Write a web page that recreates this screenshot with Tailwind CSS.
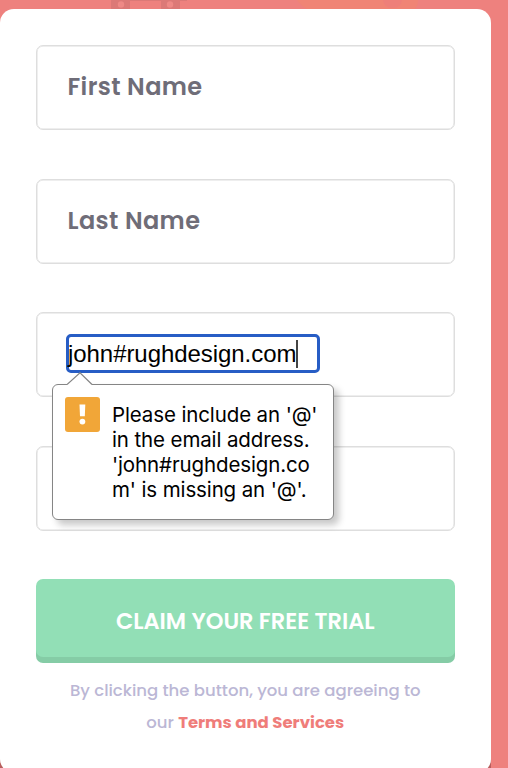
<!DOCTYPE html>
<html lang="en">
<head>
<meta charset="utf-8">
<title>Claim your free trial</title>
<script src="https://cdn.jsdelivr.net/npm/@tailwindcss/browser@4"></script>
</head>
<body class="relative h-[768px] w-[508px] overflow-hidden bg-[#ee817e] pt-[9px] font-['Poppins','Inter',sans-serif]">
  <svg class="absolute left-0 top-0" width="508" height="10" viewBox="0 0 508 10" aria-hidden="true">
    <path d="M111 0H187V1H180V9H161V1H130V9H111Z" fill="#dc7977"/>
    <circle cx="121" cy="4.500" r="3.200" fill="#ee8986"/>
    <circle cx="170" cy="4.500" r="3.200" fill="#ee8986"/>
    <path d="M297 0H418Q418 6 415 9H307Q300 5 297 0Z" fill="#f08475"/>
    <path d="M383 0H402Q401 8 392.500 8Q384 8 383 0Z" fill="#ee7f79"/>
  </svg>
  <main class="relative h-[764px] w-[490.500px] rounded-[14px] bg-white pl-9 pr-9 pt-9 shadow-[0_8px_0_#b85f5d]">
    <form class="flex w-[418.500px] flex-col">
      <div class="flex flex-col gap-[48.300px]">
        <div class="flex h-[85.300px] items-center rounded-[7px] border border-[#dedede] pb-[1.500px] pl-[30.500px] shadow-[inset_0_0_0_0.500px_#dedede]">
          <span class="whitespace-nowrap text-[24px] font-semibold tracking-[0.400px] text-[#6f6d78]">First Name</span>
        </div>
        <div class="flex h-[85.300px] items-center rounded-[7px] border border-[#dedede] pb-[1px] pl-[30.500px] shadow-[inset_0_0_0_0.500px_#dedede]">
          <span class="whitespace-nowrap text-[24px] font-semibold tracking-[0.400px] text-[#6f6d78]">Last Name</span>
        </div>
        <div class="relative flex h-[85.300px] items-start rounded-[7px] border border-[#dedede] pl-[29px] pt-[21px] shadow-[inset_0_0_0_0.500px_#dedede]">
          <div class="flex h-[39px] w-[253.500px] items-center rounded-[5px] border-[3px] border-[#275dc5] bg-white">
            <span class="-ml-px whitespace-nowrap font-['Liberation_Sans',Arial,sans-serif] text-[24px] tracking-[-0.060px] text-black">john#rughdesign.com</span>
            <span class="h-[28px] w-[1.500px] bg-[#444]"></span>
          </div>
          <div class="absolute left-[15px] top-[71px] z-10 flex h-[136px] w-[282px] rounded-[6px] border-[1.500px] border-[#858585] bg-white pl-[12px] pt-[12px] shadow-[5px_5px_7px_rgba(0,0,0,0.22)]">
            <svg class="absolute left-[14px] top-[-13px]" width="26" height="14" viewBox="0 0 26 14" aria-hidden="true"><path d="M0 12.500L13 .8L25 12.500V14H0Z" fill="white"/><path d="M0 12.500L13 .8L25 12.500" fill="none" stroke="#858585" stroke-width="1.200"/></svg>
            <svg class="shrink-0" width="35" height="35" viewBox="0 0 35 35" aria-label="Warning"><rect width="35" height="35" rx="3" fill="#f1a638"/><path d="M14.500 7.500H20.300L19.800 19.300H15Z" fill="white"/><circle cx="17.400" cy="24.600" r="2.900" fill="white"/></svg>
            <p class="ml-[12px] mt-[4.500px] whitespace-nowrap font-['Inter',sans-serif] text-[20.500px] leading-[25px] tracking-[-0.120px] text-black">Please include an '@'<br>in the email address.<br>'john#rughdesign.co<br>m' is missing an '@'.</p>
          </div>
        </div>
        <div class="h-[85.300px] rounded-[7px] border border-[#dedede] shadow-[inset_0_0_0_0.500px_#dedede]"></div>
      </div>
      <button type="button" class="mt-[48px] flex h-[78px] items-center justify-center rounded-[7px] bg-[#92dfb6] pt-[8px] text-[22.500px] font-semibold text-white shadow-[0_6px_0_#85cca6]"><span class="whitespace-nowrap">CLAIM YOUR FREE TRIAL</span></button>
      <p class="mt-[18px] whitespace-nowrap text-center text-[16.500px] font-medium leading-8 text-[#bbb7d5]"><span>By clicking the button, you are agreeing to</span><br><span>our <a class="font-bold text-[#ef7d7a]">Terms and Services</a></span></p>
    </form>
  </main>
</body>
</html>
